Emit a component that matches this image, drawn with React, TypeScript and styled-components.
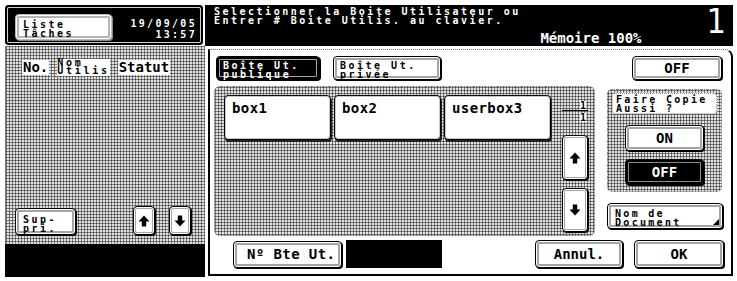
import React from "react";
import styled, { createGlobalStyle, css } from "styled-components";

const GlobalStyle = createGlobalStyle`
  html, body { margin: 0; padding: 0; background: #fff; }
  body { font-family: "DejaVu Sans Mono", monospace; }
  button { font: inherit; color: inherit; padding: 0; margin: 0; cursor: default; }
`;

const hatch = css`
  background-color: #e2e2e2;
  background-image:
    linear-gradient(90deg, rgba(0, 0, 0, 0.45) 1px, transparent 1px),
    linear-gradient(rgba(0, 0, 0, 0.45) 1px, transparent 1px);
  background-size: 3px 3px;
`;

const pixelFont = css`
  font-family: "DejaVu Sans Mono", monospace;
  font-weight: bold;
  font-size: 10px;
  letter-spacing: 2.5px;
  line-height: 9px;
`;

const bigFont = css`
  font-family: "DejaVu Sans Mono", monospace;
  font-weight: bold;
  font-size: 14px;
`;

const framed = css`
  box-sizing: border-box;
  border: 1px solid #000;
  border-radius: 4px;
  background: #fff;
  color: #000;
  box-shadow: inset 0 0 0 1px #fff, inset 0 0 0 3px #a4a4a4, 1px 1px 0 #000;
`;

const Screen = styled.div`
  width: 737px;
  height: 281px;
  box-sizing: border-box;
  padding: 5px 4px 4px 5px;
  display: grid;
  grid-template-columns: 200px 528px;
  overflow: hidden;
`;

/* ---------- left column ---------- */
const LeftCol = styled.div`
  display: flex;
  flex-direction: column;
`;

const TopLeft = styled.div`
  height: 40px;
  margin-right: 2px;
  box-sizing: border-box;
  background: #000;
  border-radius: 4px;
  box-shadow: inset 0 0 0 2px #000, inset 0 0 0 3px #cfcfcf;
  display: flex;
  justify-content: space-between;
  padding: 9px 8px 0 10px;
`;

const ListeButton = styled.button`
  ${framed};
  ${pixelFont};
  width: 97px;
  height: 26px;
  text-align: left;
  padding: 3px 0 0 7px;
  box-shadow: inset 0 0 0 1px #fff, inset 0 0 0 3px #b4b4b4, 1px 1px 0 #888;
  border: 1px solid #bdbdbd;
`;

const DateBlock = styled.div`
  ${pixelFont};
  color: #fff;
  text-align: right;
  line-height: 11px;
  padding-top: 4px;
  letter-spacing: 2.3px;
  margin-right: -2px;
`;

const LeftList = styled.div`
  ${hatch};
  margin-top: 1px;
  flex: 1;
  display: flex;
  flex-direction: column;
  justify-content: space-between;
  border-left: 1px solid #777;
`;

const ListHeader = styled.div`
  display: flex;
  align-items: center;
  gap: 8px;
  margin-top: 13px;
  padding-left: 16px;
  height: 17px;
`;

const HeadBig = styled.span`
  ${bigFont};
  background: #fff;
  line-height: 15px;
  padding: 0 1px;
`;

const HeadSmall = styled.span`
  ${pixelFont};
  letter-spacing: 2.7px;
  line-height: 8px;
  background: #fff;
  padding: 0 0 1px;
`;

const ListFooter = styled.div`
  display: flex;
  align-items: flex-end;
  padding: 0 14px 9px 9px;
`;

const SupButton = styled.button`
  ${framed};
  ${pixelFont};
  width: 61px;
  height: 27px;
  text-align: left;
  padding: 4px 0 0 7px;
  margin-right: auto;
`;

const ArrowButton = styled.button<{ $w: number; $h: number }>`
  ${framed};
  width: ${(p) => p.$w}px;
  height: ${(p) => p.$h}px;
  display: flex;
  align-items: center;
  justify-content: center;
  box-shadow: inset 0 0 0 1px #fff, inset 0 0 0 2px #a4a4a4, 1px 1px 0 #000;
`;

const ArrowGap = styled.div`
  width: 14px;
`;

const BlackBar = styled.div`
  height: 33px;
  background: #000;
`;

/* ---------- right column ---------- */
const RightCol = styled.div`
  display: flex;
  flex-direction: column;
`;

const Header = styled.div`
  height: 41px;
  box-sizing: border-box;
  background: #000;
  color: #fff;
  display: flex;
  padding: 2px 7px 0 9px;
`;

const Message = styled.div`
  flex: 1;
  display: flex;
  flex-direction: column;
`;

const MessageLine = styled.div`
  ${pixelFont};
  white-space: pre;
`;

const Memory = styled.div`
  ${bigFont};
  line-height: 14px;
  margin-top: 6px;
  align-self: flex-end;
  margin-right: 65px;
`;

const BigNumber = styled.div`
  font-family: "DejaVu Sans", sans-serif;
  font-stretch: condensed;
  font-weight: normal;
  font-size: 34px;
  line-height: 34px;
  margin-top: -3px;
`;

const MainPanel = styled.div`
  flex: 1;
  margin-left: 3px;
  margin-top: 3px;
  margin-bottom: 1px;
  box-sizing: border-box;
  background: #fff;
  border: 2px solid #000;
  border-top: 1px dotted #777;
  border-top-right-radius: 8px;
  display: flex;
  flex-direction: column;
`;

const TopRow = styled.div`
  display: flex;
  align-items: center;
  gap: 13px;
  padding: 6px 9px 0 6px;
  height: 24px;
`;

const Tab = styled.button<{ $active?: boolean }>`
  ${framed};
  ${pixelFont};
  width: ${(p) => (p.$active ? 104 : 108)}px;
  height: 24px;
  text-align: left;
  padding: 3px 0 0 6px;
  ${(p) =>
    p.$active &&
    css`
      background: #000;
      color: #fff;
      box-shadow: inset 0 0 0 2px #000, inset 0 0 0 3px #a4a4a4, 1px 1px 0 #000;
    `}
`;

const BigButton = styled.button<{ $w: number; $h: number; $dark?: boolean }>`
  ${framed};
  ${bigFont};
  width: ${(p) => p.$w}px;
  height: ${(p) => p.$h}px;
  display: flex;
  align-items: center;
  justify-content: center;
  ${(p) =>
    p.$dark &&
    css`
      background: #000;
      color: #fff;
      box-shadow: inset 0 0 0 2px #000, inset 0 0 0 3px #8a8a8a, 1px 1px 0 #000;
    `}
`;

const PushRight = styled.div`
  margin-left: auto;
`;

const MiddleRow = styled.div`
  display: flex;
  margin-top: 6px;
  height: 150px;
`;

const ListArea = styled.div`
  ${hatch};
  margin-left: 4px;
  width: 381px;
  box-sizing: border-box;
  border: 1px dotted #888;
  border-radius: 6px;
  display: flex;
  padding: 8px 7px 0 9px;
`;

const Tiles = styled.div`
  display: flex;
  gap: 3px;
  align-items: flex-start;
`;

const Tile = styled.button`
  box-sizing: border-box;
  width: 107px;
  height: 45px;
  background: #fff;
  border: 1px solid #000;
  border-radius: 4px;
  box-shadow: inset 0 0 0 1px #c8c8c8, 1px 2px 0 #222;
  ${bigFont};
  letter-spacing: 0.4px;
  text-align: left;
  display: flex;
  align-items: flex-start;
  padding: 4px 0 0 7px;
`;

const PageCol = styled.div`
  margin-left: 11px;
  width: 26px;
  display: flex;
  flex-direction: column;
`;

const PageIndicator = styled.div`
  margin-top: 6px;
  height: 26px;
  font-family: "DejaVu Sans Mono", monospace;
  font-weight: bold;
  font-size: 10px;
  line-height: 9px;
  text-align: right;
  padding-right: 2px;
  display: flex;
  flex-direction: column;
`;

const PageRule = styled.div`
  height: 1px;
  background: #000;
  margin: 0 -2px 2px 0;
`;

const PageNum = styled.div`
  background: #fff;
  align-self: flex-end;
`;

const SideCol = styled.div`
  margin-left: 12px;
  width: 115px;
  display: flex;
  flex-direction: column;
`;

const CopyPanel = styled.div`
  ${hatch};
  margin-top: 3px;
  height: 103px;
  box-sizing: border-box;
  border: 1px dotted #888;
  border-radius: 5px;
  display: flex;
  flex-direction: column;
  align-items: center;
  padding: 3px 4px 0 4px;
`;

const CopyLabel = styled.div`
  ${pixelFont};
  letter-spacing: 2.3px;
  align-self: stretch;
  height: 21px;
  box-sizing: border-box;
  background: #fff;
  border: 1px dotted #999;
  border-radius: 4px;
  padding: 1px 0 0 3px;
`;

const Spacer = styled.div<{ $h: number }>`
  height: ${(p) => p.$h}px;
  flex: none;
`;

const DocButton = styled.button`
  ${framed};
  ${pixelFont};
  letter-spacing: 2.3px;
  margin-top: 11px;
  width: 116px;
  height: 26px;
  text-align: left;
  padding: 3px 0 0 7px;
  position: relative;
`;

const Corner = styled.span`
  position: absolute;
  right: 3px;
  bottom: 3px;
  width: 0;
  height: 0;
  border-left: 6px solid transparent;
  border-bottom: 6px solid #000;
`;

const BottomRow = styled.div`
  display: flex;
  align-items: center;
  margin-top: 4px;
  height: 28px;
  padding: 0 7px 0 23px;
`;

const NumButton = styled(BigButton)`
  justify-content: flex-start;
  padding-left: 13px;
  letter-spacing: 0.4px;
`;

const NumField = styled.div`
  margin-left: 4px;
  width: 96px;
  height: 28px;
  background: #000;
`;

const OkGap = styled.div`
  width: 11px;
`;

const Arrow = ({ dir }: { dir: "up" | "down" }) => (
  <svg width="12" height="12" viewBox="0 0 12 12" style={{ transform: dir === "down" ? "rotate(180deg)" : undefined }}>
    <path d="M6 0.5 L11.5 6.5 H8.2 V11.5 H3.8 V6.5 H0.5 Z" fill="#000" />
  </svg>
);

export default function App() {
  return (
    <>
      <GlobalStyle />
      <Screen>
        <LeftCol>
          <TopLeft>
            <ListeButton>
              Liste
              <br />
              Tâches
            </ListeButton>
            <DateBlock>
              19/09/05
              <br />
              13:57
            </DateBlock>
          </TopLeft>
          <LeftList>
            <ListHeader>
              <HeadBig>No.</HeadBig>
              <HeadSmall>
                Nom
                <br />
                Utilis
              </HeadSmall>
              <HeadBig>Statut</HeadBig>
            </ListHeader>
            <ListFooter>
              <SupButton>
                Sup-
                <br />
                pri.
              </SupButton>
              <ArrowButton $w={22} $h={29}>
                <Arrow dir="up" />
              </ArrowButton>
              <ArrowGap />
              <ArrowButton $w={22} $h={29}>
                <Arrow dir="down" />
              </ArrowButton>
            </ListFooter>
          </LeftList>
          <BlackBar />
        </LeftCol>

        <RightCol>
          <Header>
            <Message>
              <MessageLine>Selectionner la Boite Utilisateur ou</MessageLine>
              <MessageLine>Entrer # Boite Utilis. au clavier.</MessageLine>
              <Memory>Mémoire 100%</Memory>
            </Message>
            <BigNumber>1</BigNumber>
          </Header>
          <MainPanel>
            <TopRow>
              <Tab $active>
                Boîte Ut.
                <br />
                publique
              </Tab>
              <Tab>
                Boîte Ut.
                <br />
                privée
              </Tab>
              <PushRight />
              <BigButton $w={90} $h={24}>
                OFF
              </BigButton>
            </TopRow>
            <MiddleRow>
              <ListArea>
                <Tiles>
                  <Tile>box1</Tile>
                  <Tile>box2</Tile>
                  <Tile>userbox3</Tile>
                </Tiles>
                <PageCol>
                  <PageIndicator>
                    <PageNum>1</PageNum>
                    <PageRule />
                    <PageNum>1</PageNum>
                  </PageIndicator>
                  <Spacer $h={8} />
                  <ArrowButton $w={26} $h={45}>
                    <Arrow dir="up" />
                  </ArrowButton>
                  <Spacer $h={8} />
                  <ArrowButton $w={26} $h={44}>
                    <Arrow dir="down" />
                  </ArrowButton>
                </PageCol>
              </ListArea>
              <SideCol>
                <CopyPanel>
                  <CopyLabel>
                    Faire Copie
                    <br />
                    Aussi ?
                  </CopyLabel>
                  <Spacer $h={11} />
                  <BigButton $w={79} $h={26}>
                    ON
                  </BigButton>
                  <Spacer $h={8} />
                  <BigButton $w={79} $h={26} $dark>
                    OFF
                  </BigButton>
                </CopyPanel>
                <DocButton>
                  Nom de
                  <br />
                  Document
                  <Corner />
                </DocButton>
              </SideCol>
            </MiddleRow>
            <BottomRow>
              <NumButton $w={109} $h={27}>
                Nº Bte Ut.
              </NumButton>
              <NumField />
              <PushRight />
              <BigButton $w={88} $h={28}>
                Annul.
              </BigButton>
              <OkGap />
              <BigButton $w={90} $h={28}>
                OK
              </BigButton>
            </BottomRow>
          </MainPanel>
        </RightCol>
      </Screen>
    </>
  );
}
